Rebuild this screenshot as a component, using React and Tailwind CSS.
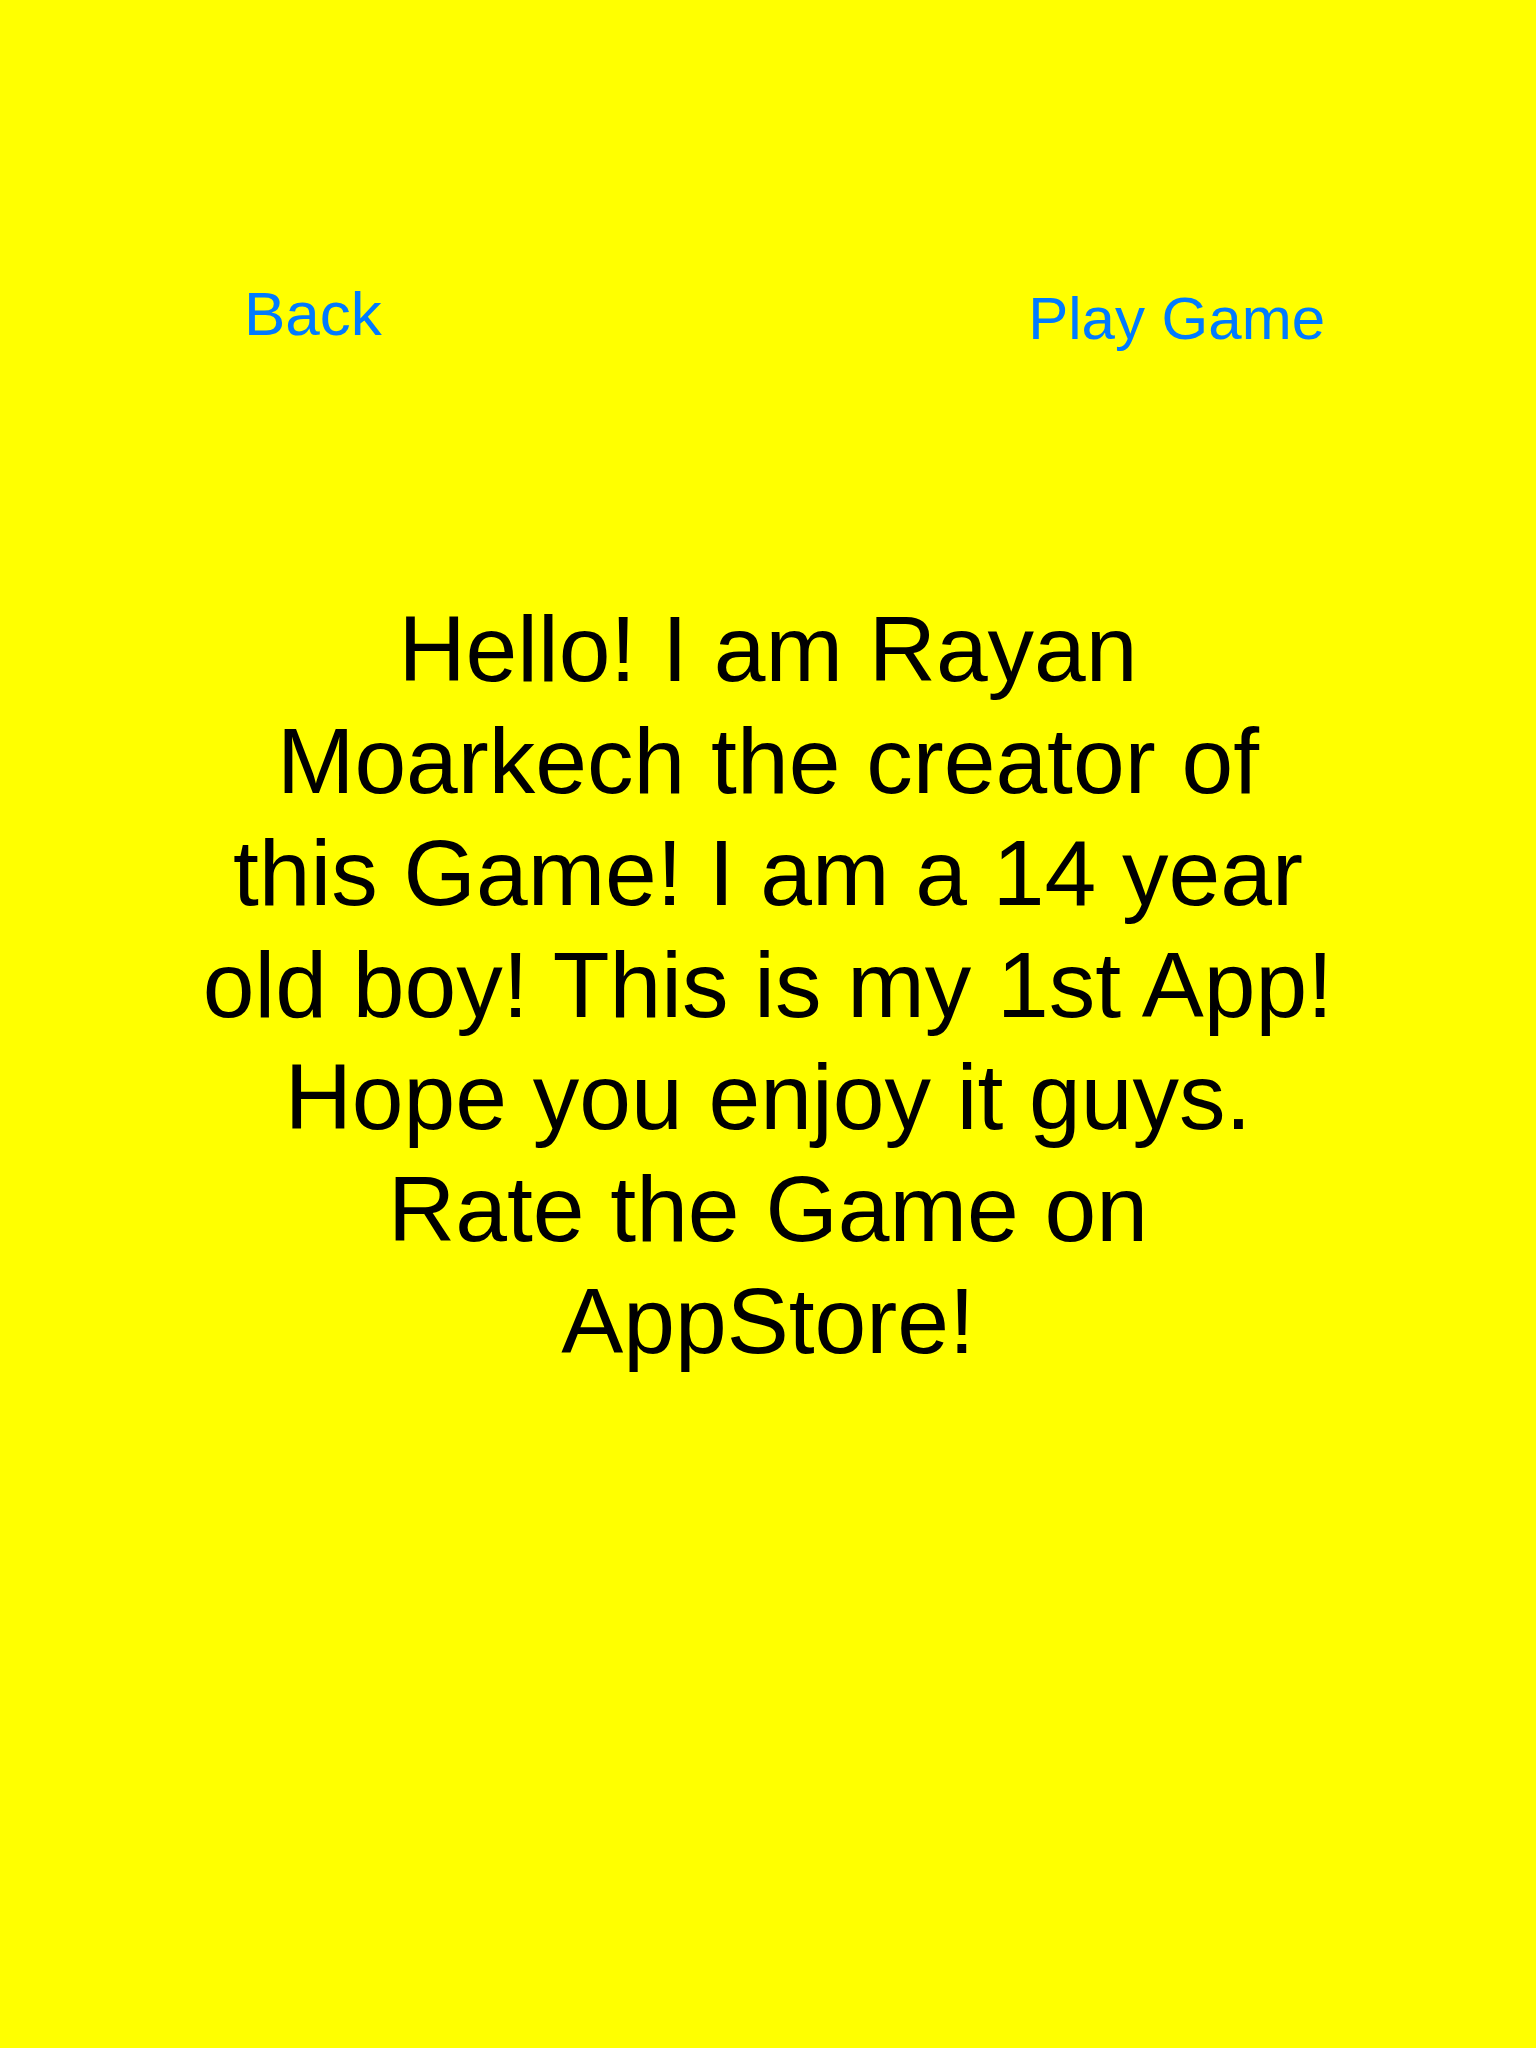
import React from "react";

const lines = [
  "Hello! I am Rayan",
  "Moarkech the creator of",
  "this Game! I am a 14 year",
  "old boy! This is my 1st App!",
  "Hope you enjoy it guys.",
  "Rate the Game on",
  "AppStore!",
];

export default function App() {
  return (
    <div
      className="min-h-[2048px] w-full bg-[#ffff00]"
      style={{ fontFamily: '"Liberation Sans", Arial, sans-serif' }}
    >
      {/* barre du haut */}
      <div className="flex items-start justify-between pt-[284px] pl-[244px] pr-[211px]">
        <a className="text-[62px] leading-[60px] text-[#007aff]">Back</a>
        <a className="mt-[5px] text-[60px] leading-[60px] text-[#007aff]">Play Game</a>
      </div>

      {/* texte principal */}
      <div className="mt-[244px] text-center text-[93px] leading-[112px] text-black">
        {lines.map((l) => (
          <div key={l}>{l}</div>
        ))}
      </div>
    </div>
  );
}
